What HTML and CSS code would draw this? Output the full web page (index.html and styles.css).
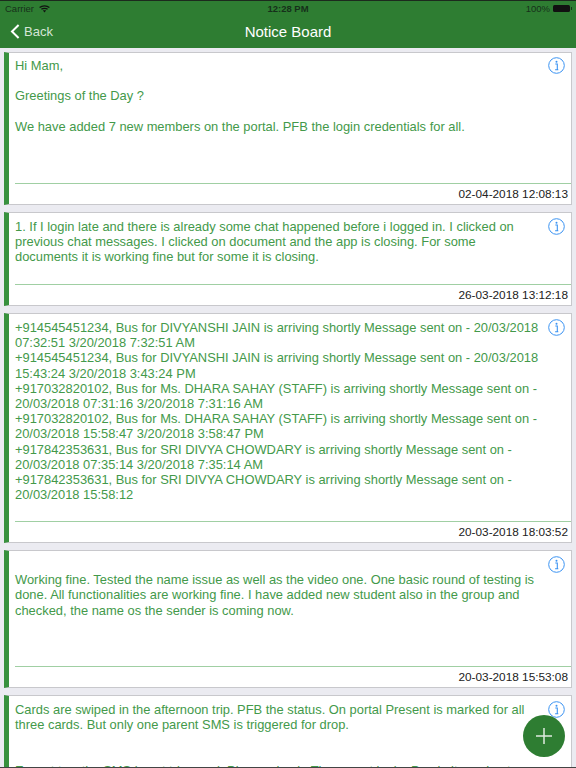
FILE: index.html
```html
<!DOCTYPE html>
<html>

<head>
    <meta charset="utf-8" />
    <title>Notice Board</title>
    <link rel="stylesheet" href="styles.css">
</head>

<body>
    <header class="topbar">
        <div class="statusbar">
            <div class="status-left">
                <span>Carrier</span>
                <svg class="wifi" width="11" height="8" viewBox="0 0 11 8">
                    <path d="M0.6 2.6 C3.3 0.3 7.7 0.3 10.4 2.6 M2.4 4.3 C4 3 7 3 8.6 4.3" fill="none" stroke="#111" stroke-width="1.3" />
                    <path d="M3.9 5.5 C4.8 5 6.2 5 7.1 5.5 L5.5 7.4 Z" fill="#111" />
                </svg>
            </div>
            <div class="status-time">12:28 PM</div>
            <div class="status-right">
                <span>100%</span>
                <div class="battery"></div>
            </div>
        </div>
        <nav class="navbar">
            <div class="back">
                <svg width="10" height="15" viewBox="0 0 10 15">
                    <path d="M8.6 1 L2 7.5 L8.6 14" fill="none" stroke="#fff" stroke-width="2" />
                </svg>
                <span>Back</span>
            </div>
            <div class="title">Notice Board</div>
        </nav>
    </header>

    <main class="list">
        <section class="card card-1">
            <div class="card-body">
                <p class="msg">Hi Mam,<br><br>Greetings of the Day ?<br><br>We have added 7 new members on the portal. PFB the login credentials for all.</p>
                <svg class="info" width="17" height="17" viewBox="0 0 17 17">
                    <circle cx="8.5" cy="8.5" r="7.8" fill="none" stroke="#3b93f2" stroke-width="1" />
                    <circle cx="8.5" cy="4.7" r="1" fill="#3b93f2" />
                    <path d="M7.3 7 H9.3 V12.6 M7.1 12.8 H10.3" fill="none" stroke="#3b93f2" stroke-width="1.1" />
                </svg>
            </div>
            <div class="card-date">02-04-2018 12:08:13</div>
        </section>

        <section class="card card-2">
            <div class="card-body">
                <p class="msg">1. If I login late and there is already some chat happened before i logged in. I clicked on previous chat messages. I clicked on document and the app is closing. For some documents it is working fine but for some it is closing.</p>
                <svg class="info" width="17" height="17" viewBox="0 0 17 17">
                    <circle cx="8.5" cy="8.5" r="7.8" fill="none" stroke="#3b93f2" stroke-width="1" />
                    <circle cx="8.5" cy="4.7" r="1" fill="#3b93f2" />
                    <path d="M7.3 7 H9.3 V12.6 M7.1 12.8 H10.3" fill="none" stroke="#3b93f2" stroke-width="1.1" />
                </svg>
            </div>
            <div class="card-date">26-03-2018 13:12:18</div>
        </section>

        <section class="card card-3">
            <div class="card-body">
                <p class="msg">+914545451234, Bus for DIVYANSHI JAIN is arriving shortly Message sent on - 20/03/2018 07:32:51 3/20/2018 7:32:51 AM<br>+914545451234, Bus for DIVYANSHI JAIN is arriving shortly Message sent on - 20/03/2018 15:43:24 3/20/2018 3:43:24 PM<br>+917032820102, Bus for Ms. DHARA SAHAY (STAFF) is arriving shortly Message sent on - 20/03/2018 07:31:16 3/20/2018 7:31:16 AM<br>+917032820102, Bus for Ms. DHARA SAHAY (STAFF) is arriving shortly Message sent on - 20/03/2018 15:58:47 3/20/2018 3:58:47 PM<br>+917842353631, Bus for SRI DIVYA CHOWDARY is arriving shortly Message sent on - 20/03/2018 07:35:14 3/20/2018 7:35:14 AM<br>+917842353631, Bus for SRI DIVYA CHOWDARY is arriving shortly Message sent on - 20/03/2018 15:58:12</p>
                <svg class="info" width="17" height="17" viewBox="0 0 17 17">
                    <circle cx="8.5" cy="8.5" r="7.8" fill="none" stroke="#3b93f2" stroke-width="1" />
                    <circle cx="8.5" cy="4.7" r="1" fill="#3b93f2" />
                    <path d="M7.3 7 H9.3 V12.6 M7.1 12.8 H10.3" fill="none" stroke="#3b93f2" stroke-width="1.1" />
                </svg>
            </div>
            <div class="card-date">20-03-2018 18:03:52</div>
        </section>

        <section class="card card-4">
            <div class="card-body">
                <p class="msg"><br>Working fine. Tested the name issue as well as the video one. One basic round of testing is done. All functionalities are working fine. I have added new student also in the group and checked, the name os the sender is coming now.</p>
                <svg class="info" width="17" height="17" viewBox="0 0 17 17">
                    <circle cx="8.5" cy="8.5" r="7.8" fill="none" stroke="#3b93f2" stroke-width="1" />
                    <circle cx="8.5" cy="4.7" r="1" fill="#3b93f2" />
                    <path d="M7.3 7 H9.3 V12.6 M7.1 12.8 H10.3" fill="none" stroke="#3b93f2" stroke-width="1.1" />
                </svg>
            </div>
            <div class="card-date">20-03-2018 15:53:08</div>
        </section>

        <section class="card card-5">
            <div class="card-body">
                <p class="msg">Cards are swiped in the afternoon trip. PFB the status. On portal Present is marked for all three cards. But only one parent SMS is triggered for drop.<br><br><br>Except two the SMS is not triggered. Please check. The parent login. Proximity and not</p>
                <svg class="info" width="17" height="17" viewBox="0 0 17 17">
                    <circle cx="8.5" cy="8.5" r="7.8" fill="none" stroke="#3b93f2" stroke-width="1" />
                    <circle cx="8.5" cy="4.7" r="1" fill="#3b93f2" />
                    <path d="M7.3 7 H9.3 V12.6 M7.1 12.8 H10.3" fill="none" stroke="#3b93f2" stroke-width="1.1" />
                </svg>
            </div>
        </section>
    </main>

    <div class="fab">
        <svg width="16" height="16" viewBox="0 0 16 16">
            <path d="M8 0 V16 M0 8 H16" stroke="#dfeadf" stroke-width="1.5" />
        </svg>
    </div>
    <div class="bottom-line"></div>
</body>

</html>
```

FILE: styles.css
```css
html,
body {
    margin: 0;
    height: 768px;
    overflow: hidden;
}

body {
    position: relative;
    background-color: #ebebf1;
    font-family: "Liberation Sans", Arial, sans-serif;
}

.topbar {
    height: 48px;
    box-sizing: border-box;
    background-color: #2e7d32;
    border-top: 1px solid #1c2a1d;
}

.statusbar {
    height: 15px;
    display: flex;
    align-items: center;
    justify-content: space-between;
    padding: 0 6px 0 5px;
    font-size: 9.5px;
    color: #16301a;
    position: relative;
}

.status-left {
    display: flex;
    align-items: center;
    gap: 5px;
}

.status-time {
    font-weight: bold;
    position: absolute;
    left: 0;
    right: 0;
    text-align: center;
}

.status-right {
    display: flex;
    align-items: center;
    gap: 3px;
}

.battery {
    width: 17px;
    height: 7px;
    background-color: #111;
    border-radius: 1.5px;
    position: relative;
}

.battery::after {
    content: "";
    position: absolute;
    right: -2px;
    top: 2px;
    width: 1px;
    height: 3px;
    background-color: #16301a;
}

.navbar {
    height: 31px;
    display: flex;
    align-items: center;
    position: relative;
    padding-left: 10px;
}

.back {
    display: flex;
    align-items: center;
    gap: 4px;
    font-size: 13px;
    color: #d5e5d6;
}

.title {
    position: absolute;
    left: 0;
    right: 0;
    text-align: center;
    font-size: 15px;
    color: #fff;
}

.list {
    display: flex;
    flex-direction: column;
    gap: 7px;
    padding: 4px 4px 0;
}

.card {
    background-color: #fff;
    border: 1px solid #c8c8cc;
    border-left: 5px solid #38913e;
    display: flex;
    flex-direction: column;
    box-sizing: border-box;
    flex-shrink: 0;
}

.card-1 {
    height: 153px;
}

.card-2 {
    height: 94px;
}

.card-3 {
    height: 230px;
}

.card-4 {
    height: 138px;
}

.card-5 {
    height: 120px;
}

.card-body {
    flex: 1;
    display: flex;
    justify-content: space-between;
    align-items: flex-start;
    margin-left: 6px;
    border-bottom: 1px solid #a0cfa3;
    padding-top: 6px;
}

.card-1 .card-body {
    padding-top: 5px;
}

.msg {
    margin: 0;
    width: 525px;
    font-size: 12.9px;
    line-height: 15.2px;
    color: #43994a;
}

.info {
    flex-shrink: 0;
    margin: -1px 6px 0 0;
}

.card-date {
    height: 20px;
    line-height: 20px;
    text-align: right;
    padding-right: 3px;
    font-size: 11.8px;
    color: #222;
}

.fab {
    position: absolute;
    right: 11px;
    bottom: 11px;
    width: 42px;
    height: 42px;
    border-radius: 50%;
    background-color: #2e7d32;
    display: flex;
    align-items: center;
    justify-content: center;
}

.bottom-line {
    position: absolute;
    left: 0;
    right: 0;
    bottom: 0;
    height: 1px;
    background-color: #444;
}
```
